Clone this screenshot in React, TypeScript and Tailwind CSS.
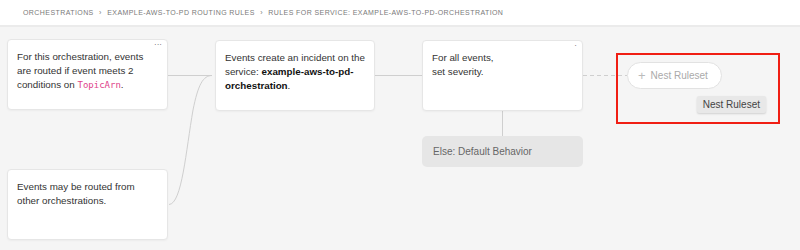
const sans = { fontFamily: '"Liberation Sans", Arial, sans-serif' };

function Card({ children, dots }: { children: React.ReactNode; dots?: string }) {
  return (
    <div className="relative h-[71px] whitespace-nowrap rounded-[4px] border border-[#e6e6e6] bg-white pl-[9px] pt-[10px] text-[9.8px] leading-[14px] text-[#333] shadow-[0_1px_2px_rgba(0,0,0,0.04)]">
      {dots && <span className="absolute right-[5px] top-[1px] text-[8px] leading-[8px] text-[#555]">{dots}</span>}
      {children}
    </div>
  );
}

function Connectors() {
  return (
    <svg className="pointer-events-none absolute inset-0" width="800" height="250" fill="none">
      <path d="M168 75.5 H212" stroke="#cfcfcf" strokeWidth="1" />
      <path d="M169 204.5 C182 204, 186 150, 193 110 C198 85, 203 75.5, 212 75.5" stroke="#cfcfcf" strokeWidth="1" />
      <path d="M375 75.5 H422" stroke="#cfcfcf" strokeWidth="1" />
      <path d="M583 75.5 H627" stroke="#cfcfcf" strokeWidth="1" strokeDasharray="4 3" />
    </svg>
  );
}

export default function App() {
  return (
    <div className="relative h-[250px] w-[800px] overflow-hidden bg-[#f5f5f5]" style={sans}>
      <div className="h-[27px] border-b-2 border-[#ebebeb] bg-white pl-[23px] pt-[9px] text-[7px] leading-[8px] tracking-[0.06em] text-[#7a7a7a]">
        ORCHESTRATIONS <span className="mx-[3px]">›</span> EXAMPLE-AWS-TO-PD ROUTING RULES <span className="mx-[3px]">›</span> RULES FOR SERVICE: EXAMPLE-AWS-TO-PD-ORCHESTRATION
      </div>
      <Connectors />
      <div className="relative flex pl-[7px] pt-[12px]">
        <div className="flex w-[161px] flex-col gap-[59px]">
          <Card dots="···">
            For this orchestration, events
            <br />
            are routed if event meets 2
            <br />
            conditions on{" "}
            <span className="text-[#e0428a]" style={{ fontFamily: '"DejaVu Sans Mono", monospace', fontSize: "9px" }}>TopicArn</span>.
          </Card>
          <Card>
            Events may be routed from
            <br />
            other orchestrations.
          </Card>
        </div>
        <div className="ml-[47px] mt-[1px] w-[160px]">
          <Card>
            Events create an incident on the
            <br />
            service: <b className="font-bold text-[#111]">example-aws-to-pd-</b>
            <br />
            <b className="font-bold text-[#111]">orchestration</b>.
          </Card>
        </div>
        <div className="ml-[47px] mt-[1px] flex w-[161px] flex-col items-center">
          <div className="w-full">
            <Card dots="·">
              For all events,
              <br />
              set severity.
            </Card>
          </div>
          <div className="h-[25px] w-px bg-[#cfcfcf]" />
          <div className="h-[31px] w-full rounded-[5px] bg-[#e6e6e6] pl-[11px] pt-[10px] text-[10px] leading-[12px] text-[#666]">
            Else: Default Behavior
          </div>
        </div>
        <div className="ml-[33px] mt-[14px] flex h-[71px] w-[164px] flex-col border-2 border-[#f01e14] pl-[9px] pr-[12px] pt-[7px]">
          <div className="flex h-[27px] w-[95px] items-center rounded-full border border-[#e2e2e2] bg-white pl-[10px] text-[10px] text-[#aaa]">
            <span className="mr-[5px] text-[13px] font-light leading-[13px] text-[#bbb]">+</span>Nest Ruleset
          </div>
          <div className="mt-[7px] self-end rounded-[2px] bg-[#e8e8e8] px-[6px] py-[3px] text-[10px] leading-[11px] text-[#444] shadow-[0_1px_2px_rgba(0,0,0,0.15)]">
            Nest Ruleset
          </div>
        </div>
      </div>
    </div>
  );
}
